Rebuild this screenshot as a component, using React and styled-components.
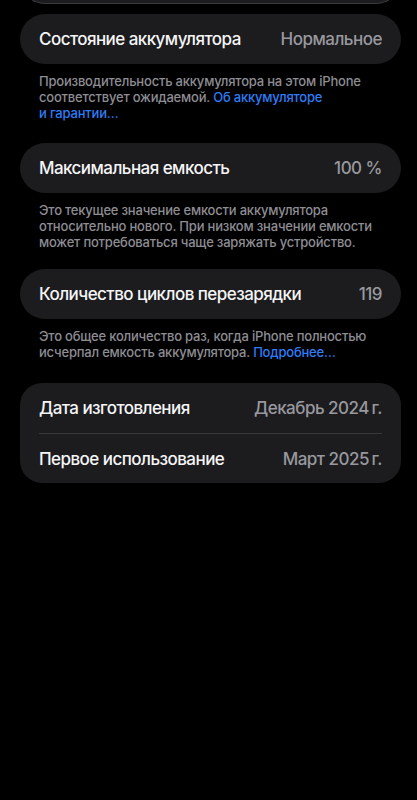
import React from "react";
import styled, { createGlobalStyle } from "styled-components";

const GlobalStyle = createGlobalStyle`
  html, body {
    margin: 0;
    padding: 0;
    background: #000;
  }
  body {
    font-family: Inter, "Noto Sans", sans-serif;
    -webkit-font-smoothing: antialiased;
  }
`;

const Page = styled.div`
  min-height: 800px;
  background: #000;
  padding: 0 16px 0 20px;
  display: flex;
  flex-direction: column;
  overflow: hidden;
`;

const Card = styled.div`
  background: #1c1c1e;
  border-radius: ${(p) => (p.$multi ? "22px" : "25px")};
  padding: 0 19px;
  display: flex;
  flex-direction: column;
`;

const CutCard = styled(Card)`
  height: 50px;
  margin-top: -47px;
  margin-bottom: 11px;
  box-shadow: 0 1px 0 #3a3a3c;
`;

const Row = styled.div`
  height: 50px;
  display: flex;
  align-items: center;
  justify-content: space-between;
  border-top: ${(p) => (p.$divider ? "1px solid #38383a" : "none")};
  box-sizing: border-box;
`;

const Label = styled.span`
  color: #f5f5f7;
  font-size: 17px;
  font-weight: 500;
  letter-spacing: -0.55px;
`;

const Value = styled.span`
  color: #98989e;
  font-size: 17px;
  font-weight: 500;
  letter-spacing: -0.5px;
`;

const Footer = styled.p`
  margin: 9px 19px 0 19px;
  color: #8d8d93;
  font-size: 13px;
  font-weight: 500;
  line-height: 16px;
  letter-spacing: -0.2px;
`;

const Link = styled.span`
  color: #2f7cf6;
`;

const Section = styled.section`
  margin-bottom: ${(p) => p.$gap}px;
`;

export default function App() {
  return (
    <>
      <GlobalStyle />
      <Page>
        <CutCard />

        <Section $gap={22}>
          <Card>
            <Row>
              <Label>Состояние аккумулятора</Label>
              <Value>Нормальное</Value>
            </Row>
          </Card>
          <Footer>
            Производительность аккумулятора на этом iPhone
            <br />
            соответствует ожидаемой. <Link>Об аккумуляторе</Link>
            <br />
            <Link>и гарантии…</Link>
          </Footer>
        </Section>

        <Section $gap={19}>
          <Card>
            <Row>
              <Label>Максимальная емкость</Label>
              <Value>100 %</Value>
            </Row>
          </Card>
          <Footer>
            Это текущее значение емкости аккумулятора
            <br />
            относительно нового. При низком значении емкости
            <br />
            может потребоваться чаще заряжать устройство.
          </Footer>
        </Section>

        <Section $gap={23}>
          <Card>
            <Row>
              <Label>Количество циклов перезарядки</Label>
              <Value>119</Value>
            </Row>
          </Card>
          <Footer>
            Это общее количество раз, когда iPhone полностью
            <br />
            исчерпал емкость аккумулятора. <Link>Подробнее…</Link>
          </Footer>
        </Section>

        <Section $gap={0}>
          <Card $multi>
            <Row>
              <Label>Дата изготовления</Label>
              <Value>Декабрь 2024{"\u2009"}г.</Value>
            </Row>
            <Row $divider>
              <Label>Первое использование</Label>
              <Value>Март 2025{"\u2009"}г.</Value>
            </Row>
          </Card>
        </Section>
      </Page>
    </>
  );
}
